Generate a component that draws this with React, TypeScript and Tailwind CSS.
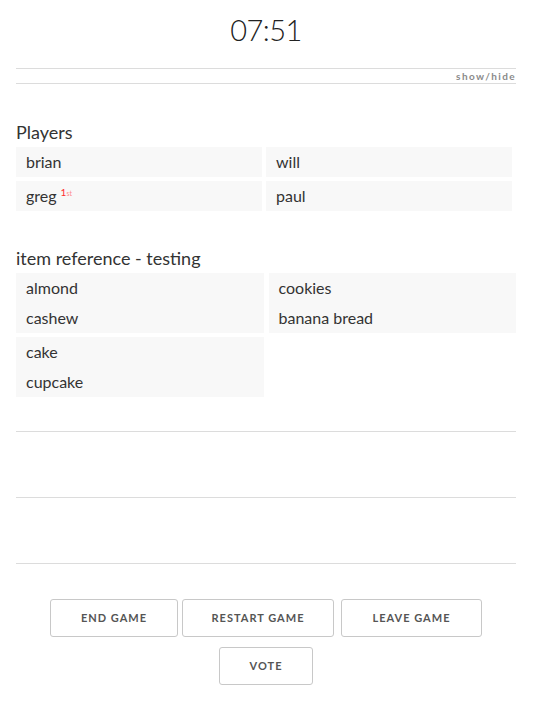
import React from "react";

const players = [
  { name: "brian" },
  { name: "will" },
  { name: "greg", place: "1" },
  { name: "paul" },
];

const groups = [
  ["almond", "cashew"],
  ["cookies", "banana bread"],
  ["cake", "cupcake"],
];

export default function App() {
  return (
    <div className="min-h-[724px] bg-white text-[#333] font-['Lato','Open_Sans',sans-serif]">
      <div className="mx-4 w-[500px]">
        {/* Timer */}
        <div className="pt-[12px] h-[68px] text-center text-[29px] font-light leading-[36px] tracking-[-0.5px] text-[#222]">
          07:51
        </div>

        {/* Show/hide bar */}
        <div className="border-t border-b border-[#dcdcdc] h-[16px] flex items-center justify-end">
          <span className="text-[10px] font-bold tracking-[1.4px] text-[#8a8a8a] leading-none">
            show/hide
          </span>
        </div>

        {/* Players */}
        <h2 className="mt-[35px] text-[18px] leading-[26px] font-normal">Players</h2>
        <div className="mt-[2px] grid grid-cols-2 gap-x-[4px] gap-y-[4px] w-[496px]">
          {players.map((p) => (
            <div key={p.name} className="h-[30px] bg-[#f8f8f8] pl-[10px] flex items-center text-[16px]">
              {p.name}
              {p.place && (
                <sup className="ml-[4px] text-[10px] text-[#ff2d2d] -top-[4px]">
                  {p.place}
                  <span className="text-[7px] text-[#ff8a8a]">st</span>
                </sup>
              )}
            </div>
          ))}
        </div>

        {/* Item reference */}
        <h2 className="mt-[34px] text-[18px] leading-[26px] font-normal">item reference - testing</h2>
        <div className="mt-[2px] grid grid-cols-2 gap-x-[5px] gap-y-[4px]">
          {groups.map((g, i) => (
            <div key={i} className="h-[60px] bg-[#f8f8f8] pl-[10px] flex flex-col text-[16px]">
              {g.map((item) => (
                <div key={item} className="h-[30px] flex items-center">
                  {item}
                </div>
              ))}
            </div>
          ))}
        </div>

        {/* Empty sections */}
        <div className="mt-[34px] border-t border-[#dcdcdc] h-[66px]" />
        <div className="border-t border-[#dcdcdc] h-[66px]" />
        <div className="border-t border-[#dcdcdc]" />

        {/* Actions */}
        <div className="mt-[35px] flex flex-wrap justify-center gap-x-[4px] gap-y-[10px] px-[30px]">
          {["END GAME", "RESTART GAME", "LEAVE GAME"].map((b, i) => (
            <button
              key={b}
              className={`h-[38px] border border-[#c8c8c8] rounded-[3px] bg-white text-[11px] font-bold tracking-[1px] text-[#555] ${
                i === 0 ? "w-[128px]" : i === 1 ? "w-[152px]" : "w-[141px] ml-[3px]"
              }`}
            >
              {b}
            </button>
          ))}
          <div className="w-full flex justify-center">
            <button className="h-[38px] w-[94px] border border-[#c8c8c8] rounded-[3px] bg-white text-[11px] font-bold tracking-[1px] text-[#555]">
              VOTE
            </button>
          </div>
        </div>
      </div>
    </div>
  );
}
